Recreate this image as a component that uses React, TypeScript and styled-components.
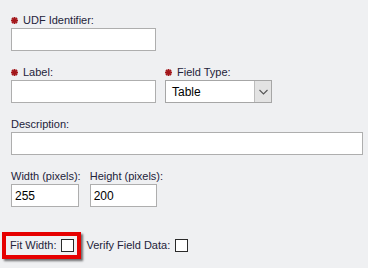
import React from "react";
import styled, { createGlobalStyle } from "styled-components";

const Global = createGlobalStyle`
  html, body { margin: 0; padding: 0; background: #eff0f2; }
  body { font-family: "Liberation Sans", Arial, sans-serif; font-size: 11px; color: #23233a; }
  * { box-sizing: border-box; }
`;

const Page = styled.div`
  width: 368px;
  height: 268px;
  padding: 13px 5px 0 11px;
  display: flex;
  flex-direction: column;
`;

const Row = styled.div<{ $top?: number }>`
  display: flex;
  align-items: flex-start;
  gap: 9px;
  margin-top: ${(p) => p.$top ?? 0}px;
`;

const Field = styled.div<{ $w?: number; $top?: number }>`
  display: flex;
  flex-direction: column;
  gap: 1px;
  width: ${(p) => (p.$w ? `${p.$w}px` : "auto")};
  margin-top: ${(p) => p.$top ?? 0}px;
`;

const Label = styled.label`
  display: flex;
  align-items: center;
  gap: 5px;
  height: 14px;
  line-height: 14px;
  white-space: nowrap;
  color: #23233a;
`;

const Input = styled.div<{ $w?: number }>`
  width: ${(p) => (p.$w ? `${p.$w}px` : "100%")};
  height: 23px;
  background: #fff;
  border: 1px solid #aeaeae;
  padding: 0 3px;
  display: flex;
  align-items: center;
  font-size: 12px;
  color: #000;
`;

const Select = styled.div`
  width: 107px;
  height: 23px;
  background: #fff;
  border: 1px solid #a6a6a6;
  display: flex;
  align-items: stretch;
  font-size: 12px;
  color: #000;
`;

const SelectValue = styled.div`
  flex: 1;
  display: flex;
  align-items: center;
  padding-left: 6px;
`;

const SelectButton = styled.div`
  width: 17px;
  background: #e3e3e3;
  border-left: 1px solid #bdbdbd;
  display: flex;
  align-items: center;
  justify-content: center;
`;

const OptionsRow = styled.div`
  display: flex;
  align-items: center;
  margin-top: 32px;
  margin-left: -1px;
  gap: 12px;
`;

const Option = styled.div<{ $highlight?: boolean }>`
  position: relative;
  display: flex;
  align-items: center;
  gap: 5px;
  height: 13px;
  line-height: 13px;
  white-space: nowrap;
  color: #23233a;
  ${(p) =>
    p.$highlight &&
    `
    &::after {
      content: "";
      position: absolute;
      top: -7px;
      bottom: -7px;
      left: -8px;
      right: -7px;
      border: 4px solid #e60000;
      box-shadow: 2px 2px 2px rgba(0,0,0,0.55);
      pointer-events: none;
    }
  `}
`;

const Checkbox = styled.span`
  width: 13px;
  height: 13px;
  background: #fff;
  border: 1px solid #2a2a2a;
  display: inline-block;
`;

const Required = () => (
  <svg width="7" height="7" viewBox="0 0 7 7" aria-hidden>
    <g stroke="#a3161b" strokeWidth="1.8" strokeLinecap="butt">
      <line x1="3.5" y1="0" x2="3.5" y2="7" />
      <line x1="0" y1="3.5" x2="7" y2="3.5" />
      <line x1="1" y1="1" x2="6" y2="6" />
      <line x1="6" y1="1" x2="1" y2="6" />
    </g>
  </svg>
);

const Chevron = () => (
  <svg width="9" height="6" viewBox="0 0 9 6" aria-hidden>
    <polyline points="0.5,1 4.5,5 8.5,1" fill="none" stroke="#555" strokeWidth="1.1" />
  </svg>
);

export default function App() {
  return (
    <>
      <Global />
      <Page>
        <Field $w={145}>
          <Label>
            <Required />
            UDF Identifier:
          </Label>
          <Input />
        </Field>

        <Row $top={14}>
          <Field $w={145}>
            <Label>
              <Required />
              Label:
            </Label>
            <Input />
          </Field>
          <Field>
            <Label>
              <Required />
              Field Type:
            </Label>
            <Select>
              <SelectValue>Table</SelectValue>
              <SelectButton>
                <Chevron />
              </SelectButton>
            </Select>
          </Field>
        </Row>

        <Field $top={14}>
          <Label>Description:</Label>
          <Input />
        </Field>

        <Row $top={14}>
          <Field>
            <Label>Width (pixels):</Label>
            <Input $w={68}>255</Input>
          </Field>
          <Field>
            <Label>Height (pixels):</Label>
            <Input $w={67}>200</Input>
          </Field>
        </Row>

        <OptionsRow>
          <Option $highlight>
            Fit Width:
            <Checkbox />
          </Option>
          <Option>
            Verify Field Data:
            <Checkbox />
          </Option>
        </OptionsRow>
      </Page>
    </>
  );
}
